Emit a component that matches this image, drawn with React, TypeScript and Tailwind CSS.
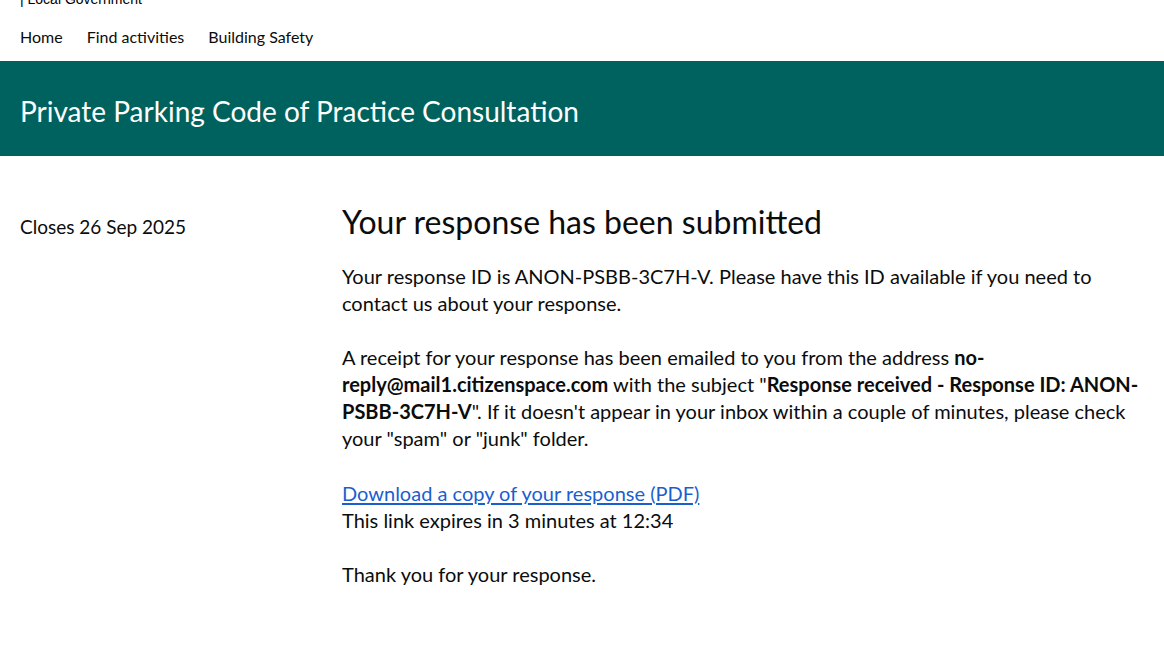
import React from 'react';

export default function App() {
  return (
    <div className="min-h-screen bg-white text-[#0b0c0c]">
      <div className="font-['Lato','Noto_Sans',sans-serif]">
        <div className="h-[8px] overflow-hidden px-5">
          <div className="-mt-[9px] font-['Liberation_Sans',Arial,sans-serif] text-[14px] leading-[16px] text-black">| Local Government</div>
        </div>
        <nav className="flex h-[53px] items-center gap-6 px-5 pt-[4px] text-[16px] text-[#0b0c0c]">
          <a href="#" className="hover:underline">Home</a>
          <a href="#" className="hover:underline">Find activities</a>
          <a href="#" className="hover:underline">Building Safety</a>
        </nav>
        <header className="flex h-[95px] items-center bg-[#00625e] px-5 pt-[4px]">
          <h2 className="text-[28px] text-white">Private Parking Code of Practice Consultation</h2>
        </header>
        <main className="flex px-5 pt-[44px]">
          <div className="w-[322px] shrink-0 pt-[13px] text-[19px]">Closes 26 Sep 2025</div>
          <div className="flex-1 text-[20px] leading-[27px]">
            <h1 className="mb-[19px] text-[32px] leading-[44px]">Your response has been submitted</h1>
            <p className="mb-[27px]">
              Your response ID is ANON-PSBB-3C7H-V. Please have this ID available if you need to contact us about your response.
            </p>
            <p className="mb-[28px]">
              A receipt for your response has been emailed to you from the address <b>no-reply@mail1.citizenspace.com</b> with the subject "<b>Response received - Response ID: ANON-PSBB-3C7H-V</b>". If it doesn't appear in your inbox within a couple of minutes, please check your "spam" or "junk" folder.
            </p>
            <p className="mb-[27px]">
              <a href="#" className="text-[#1a5fcf] underline underline-offset-2">Download a copy of your response (PDF)</a>
              <br />
              This link expires in 3 minutes at 12:34
            </p>
            <p>Thank you for your response.</p>
          </div>
        </main>
      </div>
    </div>
  );
}
